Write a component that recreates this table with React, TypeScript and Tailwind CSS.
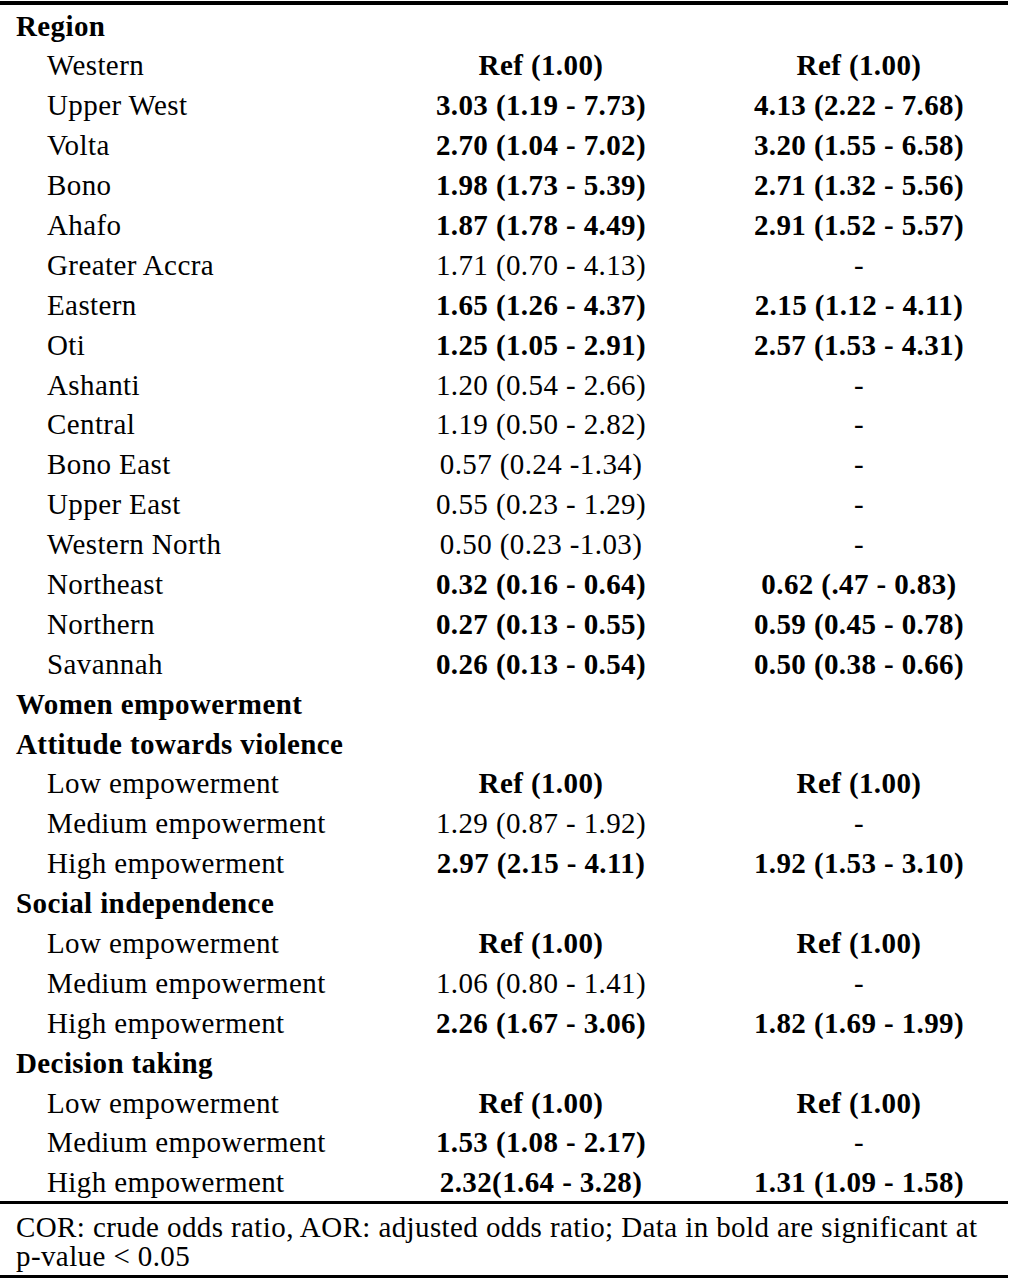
import React from "react";

type Row =
  | { kind: "h"; label: string }
  | { kind: "r"; label: string; c: string; cb: boolean; a: string; ab: boolean };

const r = (label: string, c: string, cb: boolean, a: string, ab: boolean): Row => ({ kind: "r", label, c, cb, a, ab });
const h = (label: string): Row => ({ kind: "h", label });

const rows: Row[] = [
  h("Region"),
  r("Western", "Ref (1.00)", true, "Ref (1.00)", true),
  r("Upper West", "3.03 (1.19 - 7.73)", true, "4.13 (2.22 - 7.68)", true),
  r("Volta", "2.70 (1.04 - 7.02)", true, "3.20 (1.55 - 6.58)", true),
  r("Bono", "1.98 (1.73 - 5.39)", true, "2.71 (1.32 - 5.56)", true),
  r("Ahafo", "1.87 (1.78 - 4.49)", true, "2.91 (1.52 - 5.57)", true),
  r("Greater Accra", "1.71 (0.70 - 4.13)", false, "-", false),
  r("Eastern", "1.65 (1.26 - 4.37)", true, "2.15 (1.12 - 4.11)", true),
  r("Oti", "1.25 (1.05 - 2.91)", true, "2.57 (1.53 - 4.31)", true),
  r("Ashanti", "1.20 (0.54 - 2.66)", false, "-", false),
  r("Central", "1.19 (0.50 - 2.82)", false, "-", false),
  r("Bono East", "0.57 (0.24 -1.34)", false, "-", false),
  r("Upper East", "0.55 (0.23 - 1.29)", false, "-", false),
  r("Western North", "0.50 (0.23 -1.03)", false, "-", false),
  r("Northeast", "0.32 (0.16 - 0.64)", true, "0.62 (.47 - 0.83)", true),
  r("Northern", "0.27 (0.13 - 0.55)", true, "0.59 (0.45 - 0.78)", true),
  r("Savannah", "0.26 (0.13 - 0.54)", true, "0.50 (0.38 - 0.66)", true),
  h("Women empowerment"),
  h("Attitude towards violence"),
  r("Low empowerment", "Ref (1.00)", true, "Ref (1.00)", true),
  r("Medium empowerment", "1.29 (0.87 - 1.92)", false, "-", false),
  r("High empowerment", "2.97 (2.15 - 4.11)", true, "1.92 (1.53 - 3.10)", true),
  h("Social independence"),
  r("Low empowerment", "Ref (1.00)", true, "Ref (1.00)", true),
  r("Medium empowerment", "1.06 (0.80 - 1.41)", false, "-", false),
  r("High empowerment", "2.26 (1.67 - 3.06)", true, "1.82 (1.69 - 1.99)", true),
  h("Decision taking"),
  r("Low empowerment", "Ref (1.00)", true, "Ref (1.00)", true),
  r("Medium empowerment", "1.53 (1.08 - 2.17)", true, "-", false),
  r("High empowerment", "2.32(1.64 - 3.28)", true, "1.31 (1.09 - 1.58)", true),
];

export default function App() {
  return (
    <div
      className="bg-white text-black w-[1011px] min-h-[1280px] tracking-[0.4px]"
      style={{ fontFamily: '"Liberation Serif", "Times New Roman", serif' }}
    >
      <div className="w-[1008px] mt-[1px] border-t-4 border-black">
        <div className="h-[1196px] pt-[1.5px]">
          {rows.map((row, i) =>
            row.kind === "h" ? (
              <div key={i} className="h-[39.9px] leading-[39.9px] text-[29px] font-bold pl-4 whitespace-nowrap">
                {row.label}
              </div>
            ) : (
              <div key={i} className="grid grid-cols-[382px_318px_1fr] h-[39.9px] leading-[39.9px] text-[29px] whitespace-nowrap">
                <div className="pl-[47px]">{row.label}</div>
                <div className={"text-center " + (row.cb ? "font-bold" : "font-normal")}>{row.c}</div>
                <div className={"text-center pl-[10px] " + (row.ab ? "font-bold" : "font-normal")}>{row.a}</div>
              </div>
            )
          )}
        </div>
        <div className="border-t-[3px] border-b-[3px] border-black pl-4 pr-2 pt-[8.5px] pb-[4px] text-[29px] leading-[29px]">
          COR: crude odds ratio, AOR: adjusted odds ratio; Data in bold are significant at{" "}
          <span className="whitespace-nowrap">p-value &lt; 0.05</span>
        </div>
      </div>
    </div>
  );
}
